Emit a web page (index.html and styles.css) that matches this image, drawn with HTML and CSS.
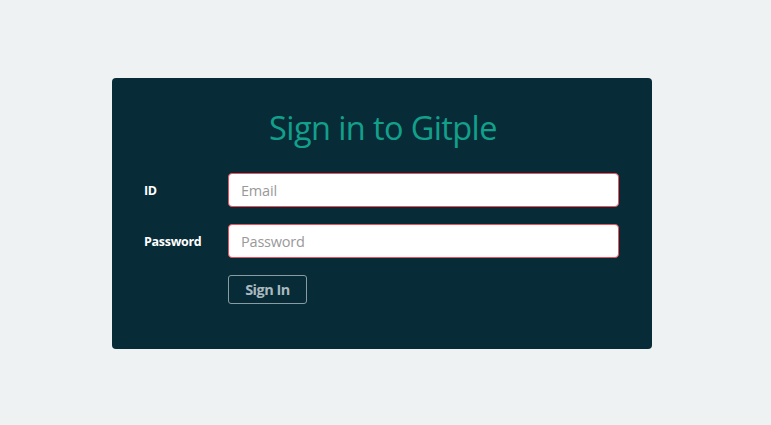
FILE: index.html
```html
<!DOCTYPE html>
<html>
<head>
<meta charset="utf-8">
<link rel="stylesheet" href="styles.css">
</head>
<body>
<div class="card">
  <h1 class="title">Sign in to Gitple</h1>
  <form class="form">
    <div class="row">
      <label class="label">ID</label>
      <input class="input" type="text" placeholder="Email">
    </div>
    <div class="row">
      <label class="label">Password</label>
      <input class="input" type="password" placeholder="Password">
    </div>
    <div class="row">
      <span class="label"></span>
      <button class="btn" type="button">Sign In</button>
    </div>
  </form>
</div>
</body>
</html>
```
FILE: styles.css
```css
html, body {
  margin: 0;
  padding: 0;
  background: #eef2f3;
  font-family: "Open Sans", "Liberation Sans", sans-serif;
}
body {
  padding-top: 78px;
}
.card {
  width: 540px;
  height: 271px;
  box-sizing: border-box;
  margin-left: 112px;
  background: #082b38;
  border-radius: 4px;
  padding: 27px 33px 0 32px;
}
.title {
  margin: 0 0 22px 0;
  text-align: center;
  font-family: "Open Sans", sans-serif;
  font-weight: 400;
  font-size: 32.5px;
  line-height: 46px;
  letter-spacing: -0.6px;
  color: #12a08b;
  padding-left: 3px;
}
.form {
  display: flex;
  flex-direction: column;
  gap: 17px;
}
.row {
  display: flex;
  align-items: center;
}
.label {
  width: 84px;
  flex: none;
  color: #ffffff;
  font-weight: 700;
  font-size: 12.5px;
  letter-spacing: -0.3px;
}
.input {
  flex: 1;
  height: 34px;
  box-sizing: border-box;
  border: 1px solid #f0505a;
  border-radius: 4px;
  padding: 0 12px;
  font-family: "Open Sans", sans-serif;
  font-size: 14.5px;
  letter-spacing: -0.2px;
  background: #fff;
  outline: none;
}
.input::placeholder {
  color: #999;
}
.btn {
  width: 79px;
  height: 29px;
  box-sizing: border-box;
  background: transparent;
  border: 1px solid #8a9ca3;
  border-radius: 3px;
  color: #a9b9bf;
  font-family: "Open Sans", sans-serif;
  font-weight: 700;
  font-size: 14.5px;
  letter-spacing: -0.5px;
  padding: 0;
}
```
